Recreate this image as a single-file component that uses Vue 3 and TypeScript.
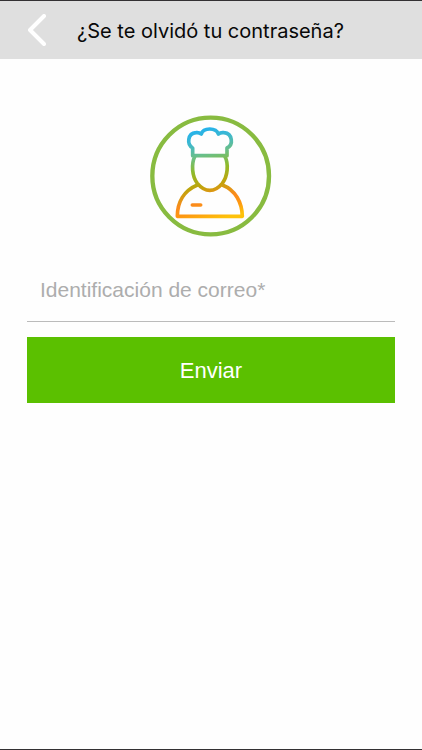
<script setup lang="ts">
import { ref } from 'vue'

const email = ref<string>('')

function submit(): void {
  email.value = email.value.trim()
}
</script>

<template>
  <div class="screen">
    <header class="bar">
      <button class="back" type="button" aria-label="Atrás">
        <svg viewBox="0 0 18 32" width="18" height="32" aria-hidden="true">
          <path d="M16 2 L2 16 L16 30" />
        </svg>
      </button>
      <h1 class="title">¿Se te olvidó tu contraseña?</h1>
    </header>

    <main class="content">
      <svg class="logo" viewBox="3 0 420 420" aria-hidden="true">
        <defs>
          <linearGradient id="chef" gradientUnits="userSpaceOnUse" x1="185" y1="65" x2="250" y2="335">
            <stop offset="0" stop-color="#22b2ee" />
            <stop offset="0.14" stop-color="#3db8d0" />
            <stop offset="0.3" stop-color="#6bbf85" />
            <stop offset="0.45" stop-color="#8dbb2c" />
            <stop offset="0.62" stop-color="#c0a40c" />
            <stop offset="0.78" stop-color="#fb8a1c" />
            <stop offset="0.88" stop-color="#fd9712" />
            <stop offset="1" stop-color="#fec20a" />
          </linearGradient>
        </defs>
        <circle class="ring" cx="212" cy="210" r="175" />
        <g class="figure">
          <path d="M158 149 V126 C140 116 142 82 168 80 C175 79 180 81 184 84 C190 64 228 64 235 84 C240 80 246 79 252 80 C278 83 281 116 261 126 V149 Z" />
          <path d="M165 150 C153 174 156 211 172 232 C195 260 224 260 247 232 C263 211 267 174 254 150" />
          <path d="M172 237 C132 254 112 289 112 331 H307 C306 289 286 252 247 237" />
          <path d="M157 297 H182" />
        </g>
      </svg>

      <form class="form" @submit.prevent="submit">
        <input
          v-model="email"
          class="field"
          type="email"
          aria-label="Identificación de correo"
          placeholder="Identificación de correo*"
        />
        <button class="send" type="submit">Enviar</button>
      </form>
    </main>
  </div>
</template>

<style>
body {
  margin: 0;
  background: #fefefe;
}
</style>

<style scoped>
.screen {
  box-sizing: border-box;
  min-height: 100vh;
  border-top: 1px solid #333133;
  border-bottom: 1px solid #333133;
  background: #fefefe;
  font-family: "Liberation Sans", Arial, sans-serif;
}

.bar {
  display: flex;
  align-items: center;
  height: 58px;
  background: #dfdfdf;
}

.back {
  display: flex;
  margin: 0;
  padding: 0 31px 0 28px;
  border: 0;
  background: none;
  cursor: pointer;
}

.back path {
  fill: none;
  stroke: #fff;
  stroke-width: 4;
  stroke-linecap: round;
  stroke-linejoin: round;
}

.title {
  margin: 0;
  padding-top: 2px;
  color: #080808;
  font-family: Inter, Roboto, sans-serif;
  font-size: 20px;
  font-weight: 400;
  line-height: 28px;
  white-space: nowrap;
}

.content {
  display: flex;
  flex-direction: column;
  align-items: center;
  padding: 47px 27px 0;
}

.logo {
  width: 140px;
  height: 140px;
}

.ring {
  fill: none;
  stroke: #88bb40;
  stroke-width: 13;
}

.figure {
  fill: none;
  stroke: url(#chef);
  stroke-width: 11;
  stroke-linecap: round;
  stroke-linejoin: round;
}

.form {
  display: flex;
  flex-direction: column;
  gap: 15px;
  width: 100%;
  margin-top: 12px;
}

.field {
  box-sizing: border-box;
  width: 100%;
  height: 64px;
  margin: 0;
  padding: 0 13px;
  border: 0;
  border-bottom: 1px solid #bbb;
  border-radius: 0;
  outline: 0;
  background: transparent;
  color: #222;
  font-family: inherit;
  font-size: 21px;
}

.field::placeholder {
  color: #adadad;
  opacity: 1;
}

.send {
  height: 66px;
  margin: 0;
  padding: 2px 0 0;
  border: 0;
  background: #5bc000;
  color: #fff;
  font-family: inherit;
  font-size: 22px;
  cursor: pointer;
}
</style>
